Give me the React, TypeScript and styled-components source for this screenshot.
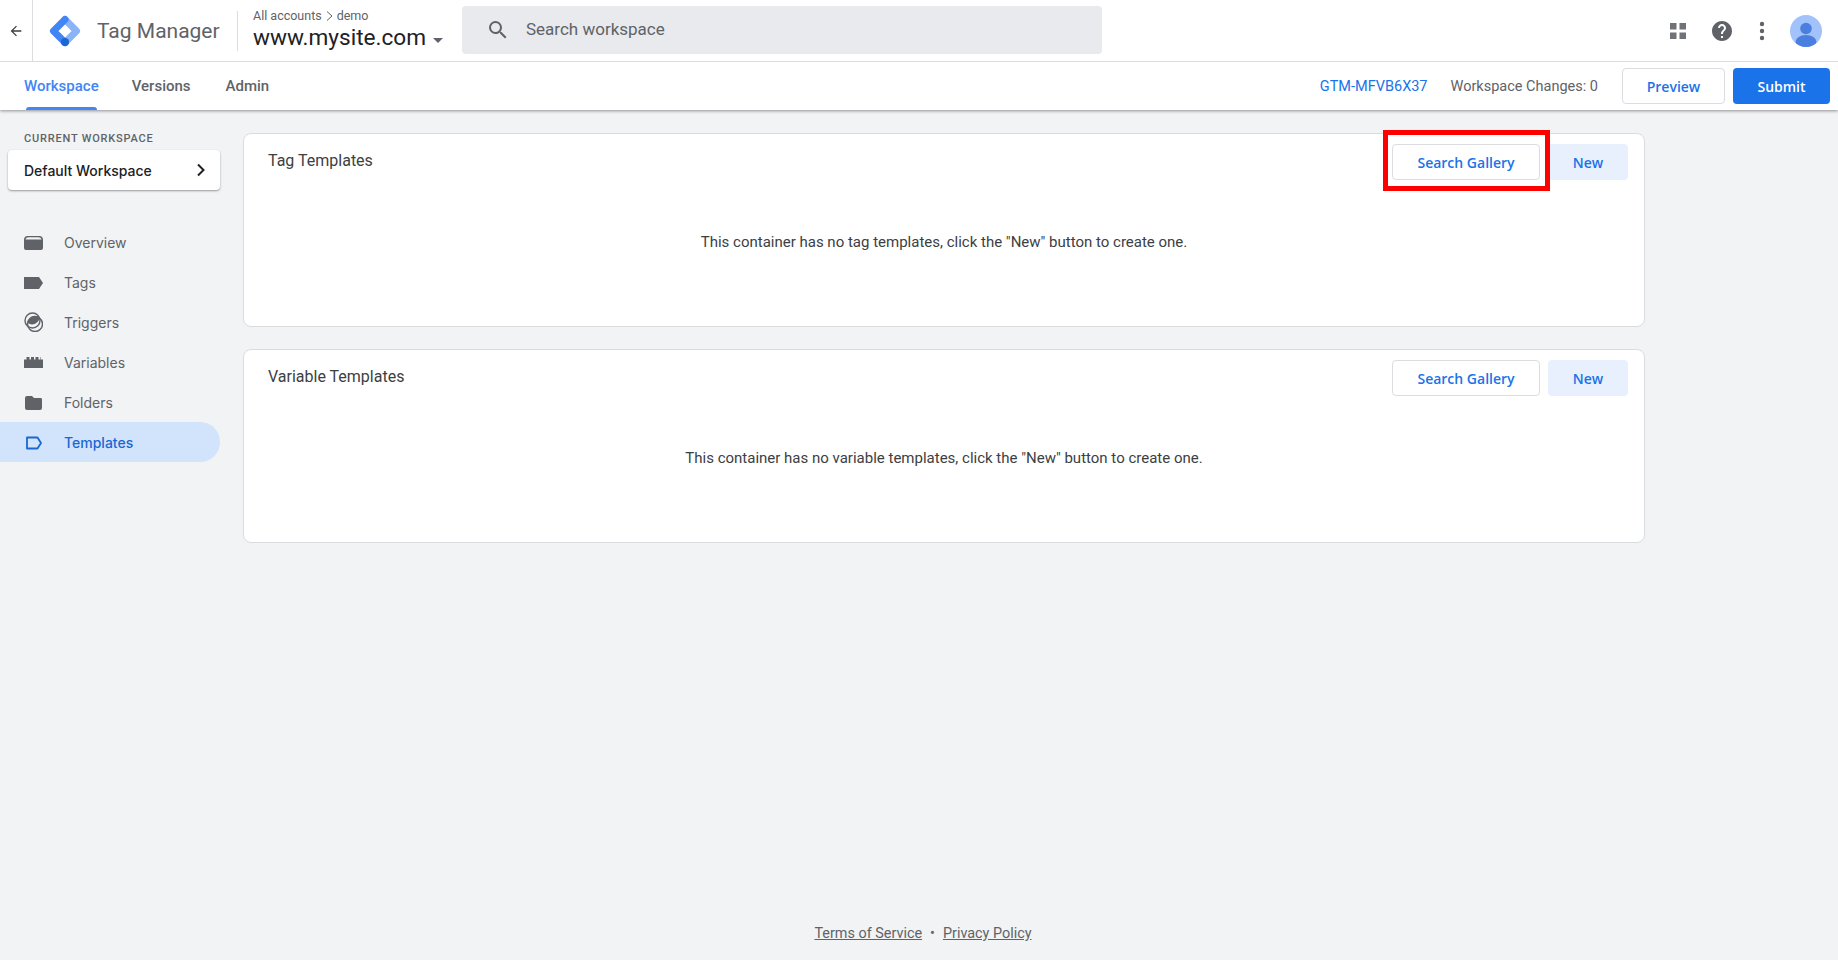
import React from "react";
import styled, { createGlobalStyle } from "styled-components";

const Global = createGlobalStyle`
  html, body { margin: 0; padding: 0; height: 100%; }
  body { background: #f1f3f4; font-family: Roboto, "Liberation Sans", sans-serif; color: #202124; overflow: hidden; }
  * { box-sizing: border-box; }
`;

const Page = styled.div`
  width: 1838px;
  height: 960px;
  display: flex;
  flex-direction: column;
  background: #f1f3f4;
`;

const TopArea = styled.header`
  background: #fff;
  box-shadow: 0 1px 3px rgba(60, 64, 67, 0.55);
  position: relative;
  z-index: 2;
  flex: none;
`;

const TopBar = styled.div`
  height: 62px;
  display: flex;
  align-items: center;
  border-bottom: 1px solid #dadce0;
`;

const BackCell = styled.div`
  width: 33px;
  height: 100%;
  display: flex;
  align-items: center;
  justify-content: center;
  border-right: 1px solid #dadce0;
  flex: none;
`;

const Logo = styled.svg`
  width: 32px;
  height: 32px;
  margin-left: 16px;
  flex: none;
`;

const ProductName = styled.div`
  margin-left: 16px;
  font-size: 21px;
  color: #5f6368;
  width: 124px;
  white-space: nowrap;
`;

const Divider = styled.div`
  width: 1px;
  height: 40px;
  background: #dadce0;
  margin: 0 15px 0 16px;
  flex: none;
`;

const Crumb = styled.div`
  width: 209px;
  flex: none;
  margin-top: 6px;
`;

const CrumbTop = styled.div`
  font-size: 12.5px;
  line-height: 14px;
  color: #5f6368;
  display: flex;
  align-items: center;
  gap: 3px;
  margin-top: -6px;
`;

const CrumbMain = styled.div`
  font-size: 22.6px;
  line-height: 28px;
  color: #202124;
  display: flex;
  align-items: center;
  gap: 7px;
  margin-top: 1px;
`;

const Caret = styled.span`
  width: 0;
  height: 0;
  margin-top: 4px;
  border-left: 5px solid transparent;
  border-right: 5px solid transparent;
  border-top: 5px solid #5f6368;
`;

const SearchBox = styled.div`
  width: 640px;
  height: 48px;
  margin-top: -2px;
  border-radius: 4px;
  background: #e8eaed;
  display: flex;
  align-items: center;
  padding-left: 24px;
  gap: 16px;
  font-size: 17px;
  color: #5f6368;
  flex: none;
`;

const SearchText = styled.span`
  margin-top: -2px;
`;

const TopIcons = styled.div`
  margin-left: auto;
  display: flex;
  align-items: center;
  padding-right: 16px;
`;

const AppsIcon = styled.svg`
  width: 16px;
  height: 16px;
  margin-right: 24px;
`;

const HelpIcon = styled.svg`
  width: 24px;
  height: 24px;
  margin-right: 25px;
`;

const DotsIcon = styled.svg`
  width: 6px;
  height: 20px;
  margin-right: 25px;
`;

const Avatar = styled.svg`
  width: 32px;
  height: 32px;
`;

const SubBar = styled.div`
  height: 48px;
  display: flex;
  align-items: center;
  padding: 0 8px 0 24px;
`;

const Tab = styled.div<{ $active?: boolean; $gap: number }>`
  position: relative;
  height: 48px;
  line-height: 48px;
  margin-right: ${(p) => p.$gap}px;
  font-size: 15px;
  font-weight: 500;
  color: ${(p) => (p.$active ? "#4285f4" : "#5f6368")};
  &::after {
    content: "";
    display: ${(p) => (p.$active ? "block" : "none")};
    position: absolute;
    left: 2px;
    right: 2px;
    bottom: 0;
    height: 3px;
    border-radius: 3px 3px 0 0;
    background: #4285f4;
  }
`;

const SubRight = styled.div`
  margin-left: auto;
  display: flex;
  align-items: center;
  gap: 8px;
`;

const ContainerId = styled.div`
  font-size: 14.5px;
  color: #1a73e8;
  margin-right: 15px;
`;

const Changes = styled.div`
  font-size: 14.5px;
  color: #5f6368;
  margin-right: 16px;
`;

const Button = styled.button<{ $kind: "outline" | "solid" | "tint"; $w: number }>`
  width: ${(p) => p.$w}px;
  height: 36px;
  border-radius: 4px;
  font-family: "Open Sans", Roboto, sans-serif;
  font-size: 14px;
  font-weight: 600;
  cursor: pointer;
  padding: 0;
  flex: none;
  border: 1px solid ${(p) => (p.$kind === "outline" ? "#dadce0" : "transparent")};
  background: ${(p) => (p.$kind === "solid" ? "#1a73e8" : p.$kind === "tint" ? "#e8f0fe" : "#fff")};
  color: ${(p) => (p.$kind === "solid" ? "#fff" : "#1a73e8")};
`;

const Body = styled.div`
  flex: 1;
  display: flex;
  min-height: 0;
`;

const Sidebar = styled.nav`
  width: 220px;
  flex: none;
  padding-top: 22px;
`;

const SideLabel = styled.div`
  font-size: 11px;
  font-weight: 500;
  line-height: 14px;
  letter-spacing: 0.8px;
  color: #5f6368;
  padding-left: 24px;
  text-transform: uppercase;
`;

const WorkspaceCard = styled.div`
  margin: 4px 0 0 8px;
  height: 40px;
  background: #fff;
  border-radius: 4px;
  box-shadow: 0 1px 2px rgba(60, 64, 67, 0.5);
  display: flex;
  align-items: center;
  justify-content: space-between;
  padding: 0 13px 0 16px;
  font-family: Inter, Roboto, sans-serif;
  font-size: 14px;
  font-weight: 500;
  color: #202124;
`;

const NavList = styled.div`
  margin-top: 32px;
`;

const NavItem = styled.div<{ $active?: boolean }>`
  height: 40px;
  display: flex;
  align-items: center;
  padding-left: 24px;
  gap: 21px;
  font-family: Inter, Roboto, sans-serif;
  font-size: 14px;
  font-weight: ${(p) => (p.$active ? 500 : 400)};
  color: ${(p) => (p.$active ? "#1967d2" : "#5f6368")};
  background: ${(p) => (p.$active ? "#d2e3fc" : "transparent")};
  border-radius: 0 20px 20px 0;
`;

const NavIcon = styled.svg`
  width: 19px;
  height: 20px;
  flex: none;
`;

const Main = styled.main`
  flex: 1;
  display: flex;
  flex-direction: column;
  min-width: 0;
`;

const Cards = styled.div`
  width: 1425px;
  padding: 23px 0 0 23px;
  display: flex;
  flex-direction: column;
  gap: 22px;
`;

const Card = styled.section`
  height: 194px;
  background: #fff;
  border: 1px solid #dadce0;
  border-radius: 8px;
  padding: 10px 16px 0;
`;

const CardHead = styled.div`
  display: flex;
  align-items: flex-start;
  justify-content: space-between;
  padding-left: 8px;
`;

const CardTitle = styled.h2`
  margin: 5px 0 0;
  font-size: 16px;
  line-height: 24px;
  font-weight: 400;
  color: #3c4043;
`;

const CardActions = styled.div`
  display: flex;
  gap: 8px;
`;

const Highlight = styled.span`
  position: relative;
  display: block;
  &::after {
    content: "";
    position: absolute;
    left: -9px;
    right: -10px;
    top: -14px;
    bottom: -11px;
    border: 5px solid #ff0000;
    pointer-events: none;
  }
`;

const Empty = styled.p`
  margin: 52px 0 0;
  text-align: center;
  font-size: 15px;
  line-height: 20px;
  color: #3c4043;
`;

const Footer = styled.footer`
  margin-top: auto;
  height: 36px;
  padding-right: 212px;
  display: flex;
  justify-content: center;
  gap: 8px;
  font-size: 14.4px;
  line-height: 20px;
  color: #5f6368;
`;

const FooterLink = styled.a`
  color: #5f6368;
  text-decoration: underline;
`;

const nav: { label: string; icon: React.ReactNode; active?: boolean }[] = [
  {
    label: "Overview",
    icon: (
      <>
        <path d="M0 8.500C0 5 1.500 4 4 4h11c2.500 0 4 1 4 4.500V16a2 2 0 0 1-2 2H2a2 2 0 0 1-2-2Z" fill="#5f6368" />
        <path d="M1.500 7.500C2 6 3 5.300 4.500 5.300h10c1.500 0 2.500.7 3 2.200Z" fill="#f1f3f4" />
      </>
    ),
  },
  { label: "Tags", icon: <path d="M0 5h15l4 6-4 6H0Z" fill="#5f6368" /> },
  {
    label: "Triggers",
    icon: (
      <>
        <circle cx="8.500" cy="8.500" r="7.500" fill="none" stroke="#5f6368" strokeWidth="1.400" />
        <circle cx="11" cy="12" r="7.500" fill="none" stroke="#5f6368" strokeWidth="1.400" />
        <path d="M3.700 11a7.500 7.500 0 0 1 11.800-5.500 7.500 7.500 0 0 1-11.800 5.500Z" fill="#5f6368" />
      </>
    ),
  },
  {
    label: "Variables",
    icon: <path d="M0 16V7.500h2.500V5h3v2.500h1.500V5h3v2.500h1.500V5h3v2.500H16V5h.5v2.500H19V16Z" fill="#5f6368" />,
  },
  {
    label: "Folders",
    icon: <path d="M1 6a2 2 0 0 1 2-2h5l2 2h7a1.500 1.500 0 0 1 1 1.500V16a2 2 0 0 1-2 2H3a2 2 0 0 1-2-2Z" fill="#5f6368" />,
  },
  {
    label: "Templates",
    active: true,
    icon: <path d="M3 5.500h10.500L17 11l-3.500 5.500H3Z" fill="none" stroke="#1967d2" strokeWidth="1.800" strokeLinejoin="round" />,
  },
];

const Actions = ({ highlight }: { highlight?: boolean }) => (
  <CardActions>
    {highlight ? (
      <Highlight>
        <Button $kind="outline" $w={148}>Search Gallery</Button>
      </Highlight>
    ) : (
      <Button $kind="outline" $w={148}>Search Gallery</Button>
    )}
    <Button $kind="tint" $w={80}>New</Button>
  </CardActions>
);

export default function App() {
  return (
    <Page>
      <Global />
      <TopArea>
        <TopBar>
          <BackCell>
            <svg width="16" height="16" viewBox="0 0 24 24" aria-hidden="true">
              <path d="M20 11H7.830l5.590-5.590L12 4l-8 8 8 8 1.410-1.410L7.830 13H20z" fill="#3c4043" />
            </svg>
          </BackCell>
          <Logo viewBox="0 0 32 32" aria-hidden="true">
            <polyline points="16,4.500 27.500,16 16,27.500" fill="none" stroke="#8ab4f8" strokeWidth="7" strokeLinecap="round" strokeLinejoin="round" />
            <polyline points="16,4.500 4.500,16 16,27.500" fill="none" stroke="#4285f4" strokeWidth="7" strokeLinecap="round" strokeLinejoin="round" />
            <circle cx="16" cy="27" r="4" fill="#1967d2" />
          </Logo>
          <ProductName>Tag Manager</ProductName>
          <Divider />
          <Crumb>
            <CrumbTop>
              All accounts
              <svg width="9" height="12" viewBox="0 0 9 12" aria-hidden="true">
                <path d="M2 1.500 7 6l-5 4.500" fill="none" stroke="#5f6368" strokeWidth="1" />
              </svg>
              demo
            </CrumbTop>
            <CrumbMain>
              www.mysite.com
              <Caret />
            </CrumbMain>
          </Crumb>
          <SearchBox>
            <svg width="24" height="24" viewBox="0 0 24 24" aria-hidden="true">
              <path
                d="M15.500 14h-.79l-.28-.27A6.470 6.470 0 0 0 16 9.500 6.500 6.500 0 1 0 9.500 16c1.610 0 3.090-.59 4.230-1.570l.27.28v.79l5 4.990L20.490 19zm-6 0C7.010 14 5 11.990 5 9.500S7.010 5 9.500 5 14 7.010 14 9.500 11.990 14 9.500 14"
                fill="#5f6368"
              />
            </svg>
            <SearchText>Search workspace</SearchText>
          </SearchBox>
          <TopIcons>
            <AppsIcon viewBox="0 0 16 16" aria-hidden="true">
              <path d="M0 0h6.500v6.500H0zM9.500 0H16v6.500H9.500zM0 9.500h6.500V16H0zM9.500 9.500H16V16H9.500z" fill="#6f7276" />
            </AppsIcon>
            <HelpIcon viewBox="0 0 24 24" aria-hidden="true">
              <path
                d="M12 2C6.480 2 2 6.480 2 12s4.480 10 10 10 10-4.480 10-10S17.520 2 12 2zm1 17h-2v-2h2zm2.070-7.750-.9.920C13.450 12.900 13 13.500 13 15h-2v-.5c0-1.100.45-2.100 1.170-2.830l1.240-1.260c.37-.36.590-.86.590-1.410 0-1.100-.9-2-2-2s-2 .9-2 2H8c0-2.210 1.790-4 4-4s4 1.790 4 4c0 .88-.36 1.680-.93 2.250z"
                fill="#5f6368"
              />
            </HelpIcon>
            <DotsIcon viewBox="0 0 6 20" aria-hidden="true">
              <circle cx="3" cy="3" r="2.200" fill="#5f6368" />
              <circle cx="3" cy="10" r="2.200" fill="#5f6368" />
              <circle cx="3" cy="17" r="2.200" fill="#5f6368" />
            </DotsIcon>
            <Avatar viewBox="0 0 32 32" aria-hidden="true">
              <clipPath id="avatar-clip"><circle cx="16" cy="16" r="16" /></clipPath>
              <circle cx="16" cy="16" r="16" fill="#a1c2fa" />
              <g clipPath="url(#avatar-clip)">
                <circle cx="16" cy="13.500" r="5.800" fill="#4a7fe0" />
                <ellipse cx="16" cy="27" rx="10.500" ry="7" fill="#4a7fe0" />
              </g>
            </Avatar>
          </TopIcons>
        </TopBar>
        <SubBar>
          <Tab $active $gap={33}>Workspace</Tab>
          <Tab $gap={35}>Versions</Tab>
          <Tab $gap={0}>Admin</Tab>
          <SubRight>
            <ContainerId>GTM-MFVB6X37</ContainerId>
            <Changes>Workspace Changes: 0</Changes>
            <Button $kind="outline" $w={103}>Preview</Button>
            <Button $kind="solid" $w={97}>Submit</Button>
          </SubRight>
        </SubBar>
      </TopArea>
      <Body>
        <Sidebar>
          <SideLabel>Current Workspace</SideLabel>
          <WorkspaceCard>
            Default Workspace
            <svg width="12" height="14" viewBox="0 0 12 14" aria-hidden="true">
              <path d="M3 1.500 8.500 7 3 12.500" fill="none" stroke="#202124" strokeWidth="2" />
            </svg>
          </WorkspaceCard>
          <NavList>
            {nav.map((n) => (
              <NavItem key={n.label} $active={n.active}>
                <NavIcon viewBox="0 0 19 20" aria-hidden="true">{n.icon}</NavIcon>
                {n.label}
              </NavItem>
            ))}
          </NavList>
        </Sidebar>
        <Main>
          <Cards>
            <Card>
              <CardHead>
                <CardTitle>Tag Templates</CardTitle>
                <Actions highlight />
              </CardHead>
              <Empty>This container has no tag templates, click the "New" button to create one.</Empty>
            </Card>
            <Card>
              <CardHead>
                <CardTitle>Variable Templates</CardTitle>
                <Actions />
              </CardHead>
              <Empty>This container has no variable templates, click the "New" button to create one.</Empty>
            </Card>
          </Cards>
          <Footer>
            <FooterLink>Terms of Service</FooterLink>
            <span>•</span>
            <FooterLink>Privacy Policy</FooterLink>
          </Footer>
        </Main>
      </Body>
    </Page>
  );
}
